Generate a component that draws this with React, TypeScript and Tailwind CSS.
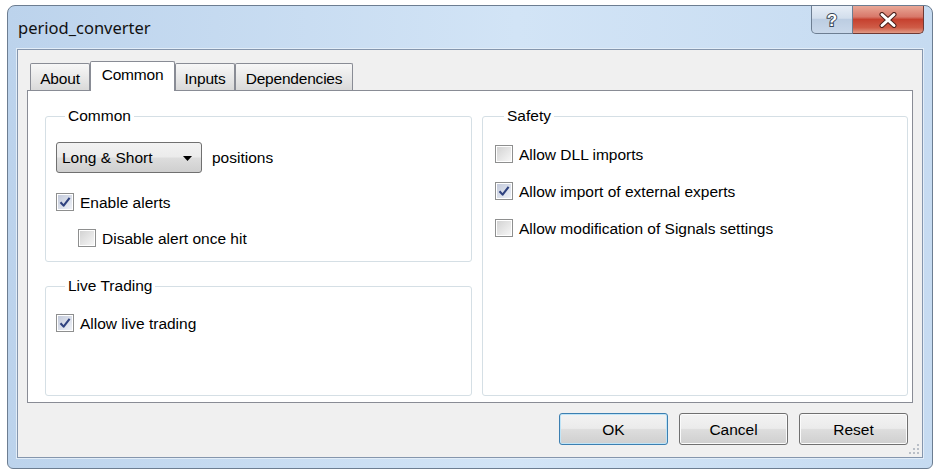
import React from "react";

const font = "font-['Liberation_Sans',Arial,sans-serif]";

const Check = () => (
  <svg width="12" height="12" viewBox="0 0 12 12">
    <path d="M1.5 6.2 L4.6 9.6 L10.6 1.8" fill="none" stroke="#2f427f" strokeWidth="2.1" strokeLinejoin="round" />
  </svg>
);

const Checkbox = ({ checked, label }: { checked?: boolean; label: string }) => (
  <div className="flex items-center h-[18px]">
    <div className="w-[18px] h-[18px] border border-[#8e8f8f] bg-white p-px shrink-0">
      <div
        className={
          checked
            ? "w-full h-full flex items-center justify-center bg-[linear-gradient(135deg,#c3cadb,#eef1f7)]"
            : "w-full h-full bg-[linear-gradient(135deg,#d3d3d3,#f6f6f6)]"
        }
      >
        {checked && <Check />}
      </div>
    </div>
    <span className="ml-[6px] pt-[2px] text-[15.5px] leading-[18px] text-black whitespace-nowrap">{label}</span>
  </div>
);

const Group = ({ title, className, children }: { title: string; className: string; children?: React.ReactNode }) => (
  <div className={"border border-[#d5dfe5] rounded-[3px] flex flex-col " + className}>
    <div className="-mt-[10px] ml-[9px] px-[3px] bg-white w-fit text-[15.5px] leading-[18px] text-black">{title}</div>
    {children}
  </div>
);

const Tab = ({ label, w, selected }: { label: string; w: string; selected?: boolean }) => (
  <div
    className={
      selected
        ? `${w} h-[30px] -mb-px relative z-10 bg-white border border-b-0 border-[#898c95] rounded-t-[2px] flex items-center justify-center pb-[3px] text-[15.5px] tracking-[-0.2px]`
        : `${w} h-[27px] border border-b-0 border-[#898c95] rounded-t-[2px] bg-[linear-gradient(to_bottom,#f7f7f7,#e9e9e9_50%,#d9d9d9)] flex items-center justify-center pt-[3px] text-[15.5px] tracking-[-0.2px]`
    }
  >
    {label}
  </div>
);

const Button = ({ label, focused }: { label: string; focused?: boolean }) => (
  <div
    className={
      "w-[109px] h-[32px] rounded-[3px] border flex items-center justify-center pt-px text-[15.5px] text-black bg-[linear-gradient(to_bottom,#f3f3f3,#ebebeb_48%,#dddddd_52%,#cfcfcf)] " +
      (focused ? "border-[#3c7fb1] shadow-[inset_0_0_0_1px_#bfe4f7]" : "border-[#707070] shadow-[inset_0_0_0_1px_#fbfbfb]")
    }
  >
    {label}
  </div>
);

export default function App() {
  return (
    <div className={`w-[938px] h-[473px] bg-white pl-[7px] pt-[5px] ${font}`}>
      <div className="w-[926px] h-[464px] border border-[#6c7d91] rounded-t-[8px] rounded-b-[6px] bg-[linear-gradient(to_right,#bcd3ec,#d2e4f6_55%,#c6dbf1)] flex flex-col">
        {/* title bar */}
        <div className="h-[43px] flex shrink-0">
          <div className="mt-[11px] ml-[10px] text-[16.5px] leading-[22px] text-[#111] font-['Noto_Sans',sans-serif]">
            period_converter
          </div>
          <div className="ml-auto mr-[8px] flex h-[28px]">
            <div className="w-[42px] h-[28px] border border-t-0 border-[#6d7e92] rounded-bl-[5px] bg-[linear-gradient(to_bottom,#e7eef7,#d2deec_45%,#bccde2_50%,#c9d8ea)] flex items-center justify-center">
              <svg width="16" height="20" viewBox="0 0 16 20">
                <text
                  x="8"
                  y="16"
                  textAnchor="middle"
                  fontFamily="Liberation Sans, Arial, sans-serif"
                  fontWeight="bold"
                  fontSize="17"
                  fill="#ffffff"
                  stroke="#3a4656"
                  strokeWidth="2"
                  paintOrder="stroke"
                >
                  ?
                </text>
              </svg>
            </div>
            <div className="w-[71px] h-[28px] border border-t-0 border-l-0 border-[#6f3a35] rounded-br-[5px] bg-[linear-gradient(to_bottom,#e9a796,#d8786a_40%,#c6412f_50%,#cf5c47_80%,#e19a86)] flex items-center justify-center">
              <svg width="20" height="16" viewBox="0 0 20 16">
                <path d="M4 2.5 L16 13.5 M16 2.5 L4 13.5" stroke="#4b1f1a" strokeWidth="5" strokeLinecap="round" />
                <path d="M4 2.5 L16 13.5 M16 2.5 L4 13.5" stroke="#ffffff" strokeWidth="3" strokeLinecap="round" />
              </svg>
            </div>
          </div>
        </div>

        {/* client area */}
        <div className="relative mx-[9px] h-[409px] border border-[#8596ad] bg-[#f0f0f0] pt-[11px] px-[9px] flex flex-col shadow-[0_0_0_1px_#e2edf8] text-black">
          <div className="flex items-end h-[29px] pl-[3px]">
            <Tab label="About" w="w-[60px]" />
            <Tab label="Common" w="w-[85px]" selected />
            <Tab label="Inputs" w="w-[60px]" />
            <Tab label="Dependencies" w="w-[118px]" />
          </div>

          <div className="h-[313px] border border-[#898c95] bg-white pt-[25px] pl-[17px] pr-[4px] flex gap-[10px]">
            <div className="w-[427px] flex flex-col">
              <Group title="Common" className="h-[146px] pl-[10px]">
                <div className="mt-[17px] flex items-center">
                  <div className="w-[146px] h-[31px] rounded-[3px] border border-[#707070] bg-[linear-gradient(to_bottom,#f2f2f2,#ebebeb_48%,#dddddd_52%,#cfcfcf)] flex items-center pl-[5px] pr-[9px] pt-px text-[15.5px]">
                    <span>Long &amp; Short</span>
                    <svg className="ml-auto" width="9" height="5" viewBox="0 0 9 5">
                      <path d="M0 0 H9 L4.5 5 Z" fill="#000" />
                    </svg>
                  </div>
                  <span className="ml-[10px] text-[15.5px]">positions</span>
                </div>
                <div className="mt-[20px]">
                  <Checkbox checked label="Enable alerts" />
                </div>
                <div className="mt-[18px] ml-[22px]">
                  <Checkbox label="Disable alert once hit" />
                </div>
              </Group>
              <Group title="Live Trading" className="mt-[24px] h-[110px] pl-[10px]">
                <div className="mt-[19px]">
                  <Checkbox checked label="Allow live trading" />
                </div>
              </Group>
            </div>

            <Group title="Safety" className="w-[426px] h-[280px] pl-[12px]">
              <div className="mt-[20px] flex flex-col gap-[19px]">
                <Checkbox label="Allow DLL imports" />
                <Checkbox checked label="Allow import of external experts" />
                <Checkbox label="Allow modification of Signals settings" />
              </div>
            </Group>
          </div>

          <div className="mt-[10px] mr-[5px] flex justify-end gap-[11px]">
            <Button label="OK" focused />
            <Button label="Cancel" />
            <Button label="Reset" />
          </div>

          {/* size grip */}
          <svg className="absolute right-[2px] bottom-[2px]" width="11" height="11" viewBox="0 0 11 11">
            {[
              [8, 0],
              [8, 4],
              [4, 4],
              [8, 8],
              [4, 8],
              [0, 8],
            ].map(([x, y], i) => (
              <rect key={i} x={x} y={y} width="2" height="2" fill="#b9bfc7" />
            ))}
          </svg>
        </div>
      </div>
    </div>
  );
}
